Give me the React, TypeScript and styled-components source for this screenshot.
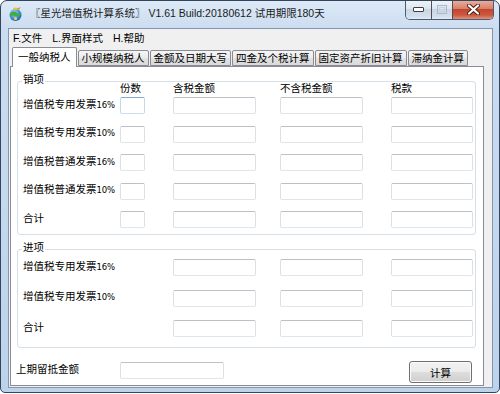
import React from "react";
import styled, { createGlobalStyle } from "styled-components";

const GlobalStyle = createGlobalStyle`
  html, body { margin: 0; padding: 0; background: #ffffff; }
  body {
    font-family: "Liberation Sans", "Noto Sans CJK SC", sans-serif;
    font-size: 10.5px;
    color: #000;
  }
  * { box-sizing: border-box; }
`;

const Window = styled.div`
  width: 500px;
  height: 393px;
  border: 1px solid #34465e;
  border-radius: 7px 7px 5px 5px;
  background: linear-gradient(180deg, #dde9f6 0px, #cadcf0 30px, #bdd3eb 100%);
  display: flex;
  flex-direction: column;
  padding: 0 6px 4px 7px;
  overflow: hidden;
`;

const TitleBar = styled.div`
  height: 27px;
  display: flex;
  align-items: flex-start;
  flex-shrink: 0;
`;

const AppIcon = styled.svg`
  width: 15px;
  height: 16px;
  margin-top: 5px;
  flex-shrink: 0;
`;

const TitleText = styled.div`
  margin-left: 7px;
  line-height: 25px;
  font-size: 10.5px;
  color: #1b1b1b;
  white-space: nowrap;
`;

const CaptionGroup = styled.div`
  margin-left: auto;
  margin-right: -1px;
  margin-top: -1px;
  display: flex;
  height: 20px;
  border: 1px solid #4a5c74;
  border-top: none;
  border-radius: 0 0 5px 5px;
  overflow: hidden;
`;

const CaptionButton = styled.div<{ $w: number; $close?: boolean }>`
  width: ${(p) => p.$w}px;
  height: 100%;
  display: flex;
  align-items: center;
  justify-content: center;
  background: ${(p) =>
    p.$close
      ? "linear-gradient(180deg, #eab2a4 0%, #d98068 45%, #c4452d 50%, #cc5a40 80%, #e0937b 100%)"
      : "linear-gradient(180deg, #f0f4f9 0%, #dde6f0 45%, #c9d6e5 50%, #d3deeb 85%, #e2eaf3 100%)"};
  & + & {
    border-left: 1px solid ${(p) => (p.$close ? "#5b4a52" : "#8a9bb1")};
  }
`;

const Client = styled.div`
  flex: 1;
  display: flex;
  flex-direction: column;
  background: #f0f0f0;
  border: 1px solid #8396b0;
  min-height: 0;
`;

const MenuBar = styled.div`
  height: 18px;
  display: flex;
  align-items: center;
  gap: 10px;
  padding-left: 4px;
  flex-shrink: 0;
`;

const MenuItem = styled.span`
  line-height: 18px;
  color: #000;
`;

const TabStrip = styled.div`
  height: 19px;
  display: flex;
  align-items: flex-end;
  gap: 1px;
  padding-left: 3px;
  flex-shrink: 0;
  position: relative;
  z-index: 1;
`;

const Tab = styled.div<{ $active?: boolean }>`
  height: ${(p) => (p.$active ? 20 : 16)}px;
  margin-bottom: ${(p) => (p.$active ? -1 : 0)}px;
  padding: 0 ${(p) => (p.$active ? 5 : 3)}px;
  line-height: ${(p) => (p.$active ? 18 : 15)}px;
  border: 1px solid #898c95;
  border-bottom: ${(p) => (p.$active ? "none" : "1px solid #898c95")};
  border-radius: 2px 2px 0 0;
  background: ${(p) =>
    p.$active
      ? "#ffffff"
      : "linear-gradient(180deg, #f5f5f5 0%, #ececec 50%, #e2e2e2 51%, #dadada 100%)"};
  white-space: nowrap;
  color: #000;
`;

const Panel = styled.div`
  flex: 1;
  margin: 0 8px 1px 1px;
  background: #ffffff;
  border: 1px solid #898c95;
  padding: 14px 7px 2px 6px;
  display: flex;
  flex-direction: column;
  min-height: 0;
`;

const GroupBox = styled.div<{ $pt: number; $pb: number; $mt: number }>`
  position: relative;
  border: 1px solid #d5dfe5;
  border-radius: 3px;
  margin-top: ${(p) => p.$mt}px;
  padding: ${(p) => p.$pt}px 0 ${(p) => p.$pb}px 5px;
`;

const Legend = styled.span`
  position: absolute;
  top: -9px;
  left: 4px;
  padding: 0 1px;
  line-height: 12px;
  background: #ffffff;
`;

const Grid = styled.div<{ $gap?: number }>`
  display: grid;
  grid-template-columns: 97px 53px 107px 111px 82px;
  row-gap: ${(p) => p.$gap ?? 0}px;
  align-items: center;
`;

const HeaderRow = styled(Grid)`
  height: 12px;
  line-height: 12px;
  margin-bottom: 3px;
`;

const HeaderCell = styled.span`
  white-space: nowrap;
`;

const RowLabel = styled.span`
  white-space: nowrap;
  padding-bottom: 3px;
  line-height: 12px;
`;

const Pct = styled.span`
  font-family: "DejaVu Sans", "Liberation Sans", sans-serif;
  font-size: 8.5px;
  letter-spacing: -0.2px;
`;

const Field = styled.div<{ $w: number; $focus?: boolean }>`
  width: ${(p) => p.$w}px;
  height: 17px;
  border: 1px solid;
  border-radius: 2px;
  border-color: ${(p) =>
    p.$focus
      ? "#86a9c8 #c2d9ec #c9def0 #c2d9ec"
      : "#bcc0c5 #dcdfe3 #e2e5e8 #dcdfe3"};
  background: #ffffff;
`;

const BottomRow = styled.div`
  display: flex;
  align-items: flex-start;
  margin: 13px 4px 0 -1px;
`;

const BottomLabel = styled.span`
  width: 104px;
  line-height: 17px;
  white-space: nowrap;
`;

const BottomField = styled(Field)`
  margin-top: 1px;
`;

const Button = styled.div`
  margin-left: auto;
  width: 63px;
  height: 22px;
  border: 1px solid #707070;
  border-radius: 3px;
  box-shadow: inset 0 0 0 1px #fafafa;
  background: linear-gradient(180deg, #f3f3f3 0%, #ebebeb 48%, #dddddd 52%, #cfcfcf 100%);
  display: flex;
  align-items: center;
  justify-content: center;
  line-height: 20px;
  padding-top: 1px;
  color: #000;
`;

type RowDef = { name: string; pct?: string };

const salesRows: RowDef[] = [
  { name: "增值税专用发票", pct: "16%" },
  { name: "增值税专用发票", pct: "10%" },
  { name: "增值税普通发票", pct: "16%" },
  { name: "增值税普通发票", pct: "10%" },
  { name: "合计" },
];

const purchaseRows: RowDef[] = [
  { name: "增值税专用发票", pct: "16%" },
  { name: "增值税专用发票", pct: "10%" },
  { name: "合计" },
];

const tabs = ["一般纳税人", "小规模纳税人", "金额及日期大写", "四金及个税计算", "固定资产折旧计算", "滞纳金计算"];

function Label({ row }: { row: RowDef }) {
  return (
    <RowLabel>
      {row.name}
      {row.pct && <Pct>{row.pct}</Pct>}
    </RowLabel>
  );
}

export default function App() {
  return (
    <>
      <GlobalStyle />
      <Window>
        <TitleBar>
          <AppIcon viewBox="0 0 15 16">
            <defs>
              <radialGradient id="g1" cx="0.4" cy="0.35" r="0.7">
                <stop offset="0" stopColor="#bfe8ff" />
                <stop offset="0.6" stopColor="#3a8fd6" />
                <stop offset="1" stopColor="#1d5a9c" />
              </radialGradient>
            </defs>
            <circle cx="7.5" cy="9" r="6" fill="url(#g1)" />
            <path d="M2 8 C4 5 7 5 9 7 C10 8 12 8 13.5 6.5 C12.5 10 9.5 11 7 10 C5 9.5 3.5 9.5 2 10.5 Z" fill="#3fae45" />
            <path d="M5 3 C6 1 9 1 10 3 C9 4 6 4 5 3 Z" fill="#f2c230" />
            <path d="M9 2.5 L12.5 1 L11 4 Z" fill="#e88a1a" />
            <circle cx="7.5" cy="12.5" r="1.6" fill="#f4d04a" />
          </AppIcon>
          <TitleText>〖星光增值税计算系统〗 V1.61 Build:20180612 试用期限180天</TitleText>
          <CaptionGroup>
            <CaptionButton $w={25}>
              <svg width="11" height="5" viewBox="0 0 11 5">
                <rect x="0.5" y="0.5" width="10" height="4" rx="0.5" fill="#ffffff" stroke="#3a3f48" />
              </svg>
            </CaptionButton>
            <CaptionButton $w={21}>
              <svg width="10" height="9" viewBox="0 0 10 9">
                <rect x="0.5" y="0.5" width="9" height="8" fill="none" stroke="#aab8ca" />
                <rect x="2.5" y="2.5" width="5" height="4" fill="none" stroke="#c6d2df" />
              </svg>
            </CaptionButton>
            <CaptionButton $w={41} $close>
              <svg width="13" height="11" viewBox="0 0 13 11">
                <path d="M2 1.5 L11 9.5 M11 1.5 L2 9.5" stroke="#4a1d14" strokeWidth="4" strokeLinecap="round" />
                <path d="M2 1.5 L11 9.5 M11 1.5 L2 9.5" stroke="#ffffff" strokeWidth="2.2" strokeLinecap="round" />
              </svg>
            </CaptionButton>
          </CaptionGroup>
        </TitleBar>
        <Client>
          <MenuBar>
            <MenuItem>F.文件</MenuItem>
            <MenuItem>L.界面样式</MenuItem>
            <MenuItem>H.帮助</MenuItem>
          </MenuBar>
          <TabStrip>
            {tabs.map((t, i) => (
              <Tab key={t} $active={i === 0}>
                {t}
              </Tab>
            ))}
          </TabStrip>
          <Panel>
            <GroupBox $pt={0} $pb={6} $mt={0}>
              <Legend>销项</Legend>
              <HeaderRow>
                <span />
                <HeaderCell>份数</HeaderCell>
                <HeaderCell>含税金额</HeaderCell>
                <HeaderCell>不含税金额</HeaderCell>
                <HeaderCell>税款</HeaderCell>
              </HeaderRow>
              <Grid $gap={11.5}>
                {salesRows.map((r, i) => (
                  <React.Fragment key={i}>
                    <Label row={r} />
                    <Field $w={25} $focus={i === 0} />
                    <Field $w={83} />
                    <Field $w={83} />
                    <Field $w={82} />
                  </React.Fragment>
                ))}
              </Grid>
            </GroupBox>
            <GroupBox $pt={9} $pb={10} $mt={14}>
              <Legend>进项</Legend>
              <Grid $gap={13.5}>
                {purchaseRows.map((r, i) => (
                  <React.Fragment key={i}>
                    <Label row={r} />
                    <span />
                    <Field $w={83} />
                    <Field $w={83} />
                    <Field $w={82} />
                  </React.Fragment>
                ))}
              </Grid>
            </GroupBox>
            <BottomRow>
              <BottomLabel>上期留抵金额</BottomLabel>
              <BottomField $w={104} />
              <Button>计算</Button>
            </BottomRow>
          </Panel>
        </Client>
      </Window>
    </>
  );
}
